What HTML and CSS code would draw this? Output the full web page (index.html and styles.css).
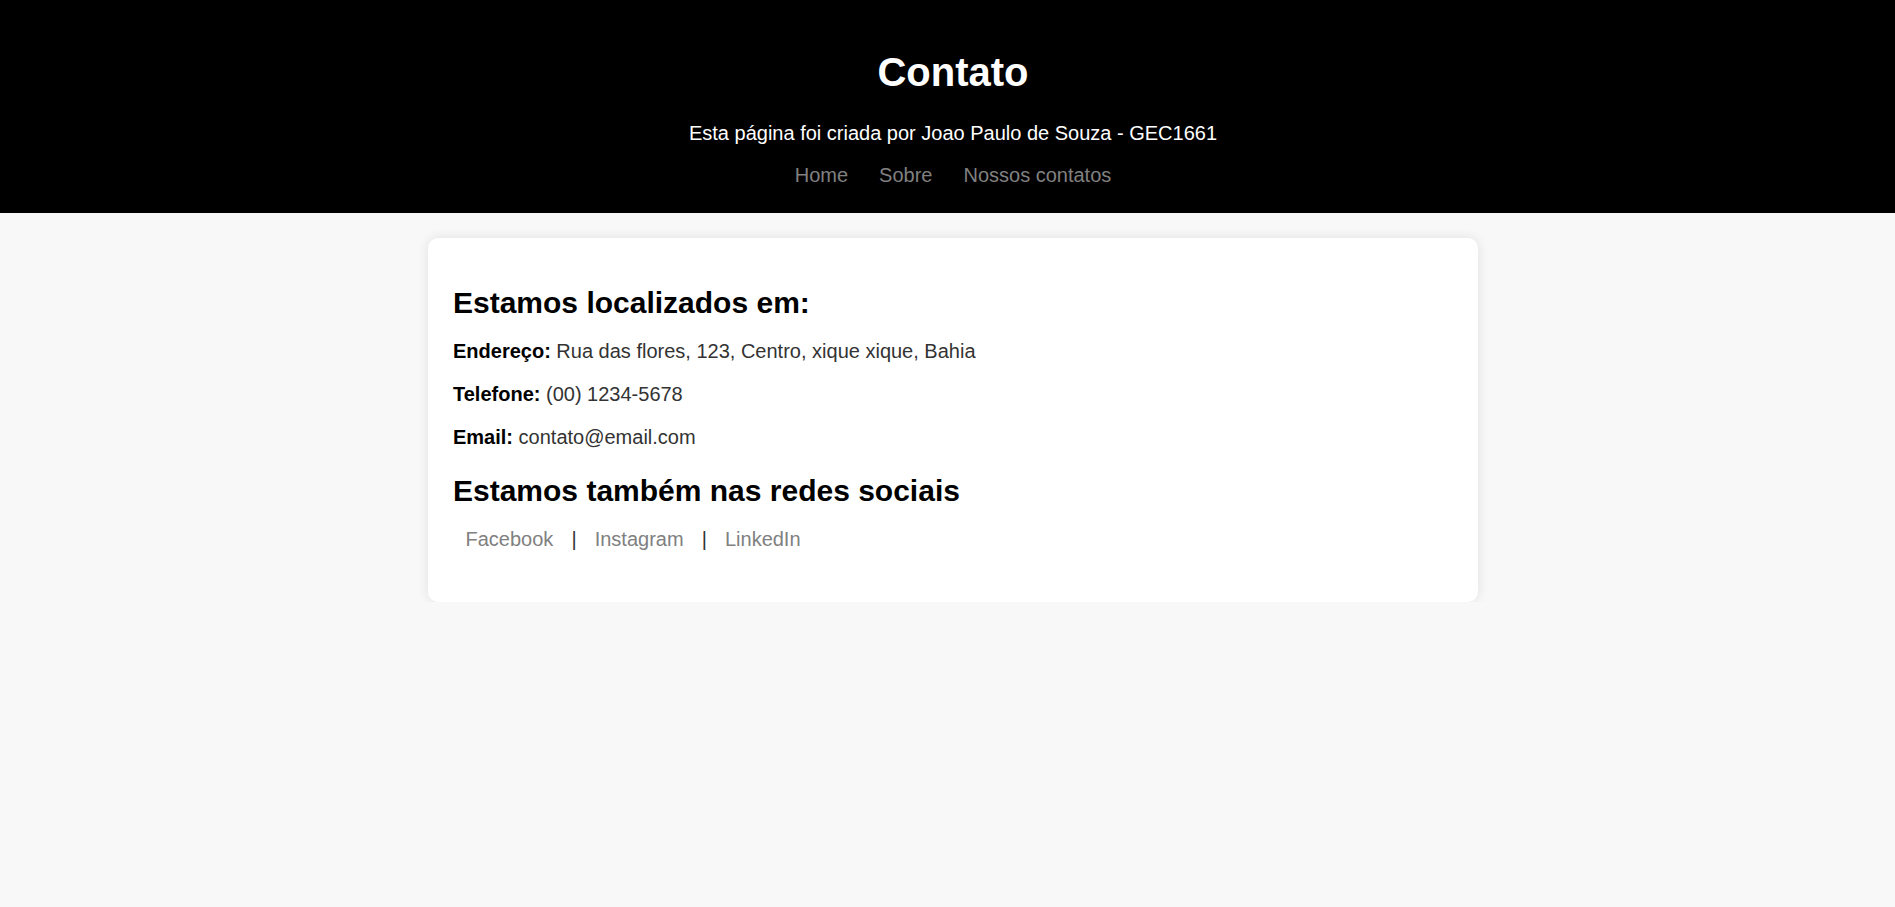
FILE: index.html
```html
<!DOCTYPE html>
<html lang="pt-BR">
<head>
<meta charset="UTF-8">
<title>Contato</title>
<link rel="stylesheet" href="styles.css">
</head>
<body>
<header class="site-header">
  <h1 class="site-title">Contato</h1>
  <p class="site-sub">Esta página foi criada por Joao Paulo de Souza - GEC1661</p>
  <nav class="site-nav">
    <a href="#" class="nav-link">Home</a>
    <a href="#" class="nav-link">Sobre</a>
    <a href="#" class="nav-link">Nossos contatos</a>
  </nav>
</header>
<main class="main">
  <section class="card">
    <h2 class="card-title first">Estamos localizados em:</h2>
    <p class="info"><strong class="label">Endereço:</strong> Rua das flores, 123, Centro, xique xique, Bahia</p>
    <p class="info"><strong class="label">Telefone:</strong> (00) 1234-5678</p>
    <p class="info"><strong class="label">Email:</strong> contato@email.com</p>
    <h2 class="card-title">Estamos também nas redes sociais</h2>
    <p class="social"><a href="#" class="social-link">Facebook</a> <span class="sep">|</span> <a href="#" class="social-link">Instagram</a> <span class="sep">|</span> <a href="#" class="social-link">LinkedIn</a></p>
  </section>
</main>
</body>
</html>
```
FILE: styles.css
```css
html, body {
  margin: 0;
  padding: 0;
}
body {
  background: #f8f8f8;
  font-family: "Liberation Sans", Arial, sans-serif;
  font-size: 20px;
  color: #333;
}
.site-header {
  background: #000;
  color: #fff;
  text-align: center;
  padding: 0 0 26px 11px;
}
.site-title {
  margin: 0;
  padding-top: 49px;
  margin-bottom: 27px;
  font-size: 40px;
  line-height: 46px;
  font-weight: bold;
}
.site-sub {
  margin: 0 0 19px;
  font-size: 20px;
  line-height: 23px;
}
.site-nav {
  display: flex;
  justify-content: center;
  gap: 31px;
  line-height: 23px;
}
.nav-link {
  color: #808080;
  text-decoration: none;
}
.main {
  display: flex;
  justify-content: center;
  padding: 25px 0 0 11px;
}
.card {
  width: 1000px;
  padding: 25px;
  background: #fff;
  border-radius: 10px;
  box-shadow: 0 0 12px rgba(0, 0, 0, 0.1);
}
.card-title {
  margin: 25px 0 20px;
  font-size: 30px;
  line-height: 34px;
  font-weight: bold;
  color: #000;
}
.card-title.first {
  margin-top: 23px;
}
.info {
  margin: 0 0 20px;
  line-height: 23px;
}
.info:last-of-type {
  margin-bottom: 0;
}
.label {
  color: #000;
}
.social {
  margin: 0 0 26px;
  line-height: 23px;
}
.social-link {
  color: #808080;
  text-decoration: none;
  margin: 0 12.5px;
}
.sep {
  color: #333;
}
```
